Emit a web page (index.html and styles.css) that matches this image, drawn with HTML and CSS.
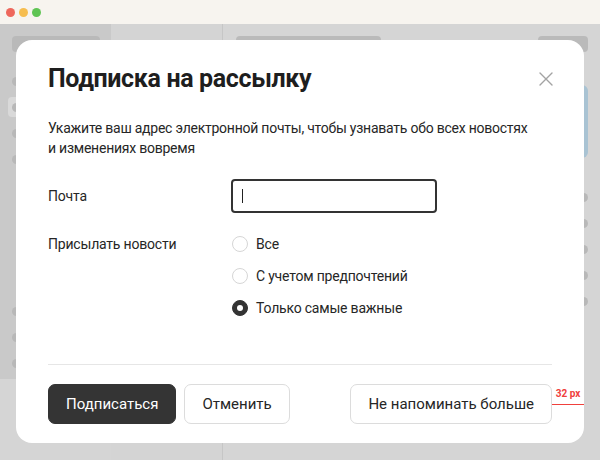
FILE: index.html
```html
<!DOCTYPE html>
<html lang="ru">
<head>
<meta charset="utf-8">
<title>Подписка на рассылку</title>
<link rel="stylesheet" href="styles.css">
</head>
<body>
<div class="window">
  <header class="titlebar">
    <span class="light red"></span>
    <span class="light yellow"></span>
    <span class="light green"></span>
  </header>

  <div class="app">
    <aside class="sidebar">
      <div class="sb-bar"></div>
      <ul class="sb-list">
        <li class="sb-item"><span class="avatar"></span></li>
        <li class="sb-item active"><span class="avatar"></span></li>
        <li class="sb-item"><span class="avatar"></span></li>
        <li class="sb-item"><span class="avatar"></span></li>
      </ul>
      <ul class="sb-list sb-bottom">
        <li class="sb-item"><span class="avatar"></span></li>
        <li class="sb-item"><span class="avatar"></span></li>
        <li class="sb-item"><span class="avatar"></span></li>
      </ul>
    </aside>
    <section class="column"></section>
    <main class="content">
      <div class="toolbar">
        <div class="tb-title"></div>
        <div class="tb-btn"></div>
      </div>
      <div class="panel"></div>
      <ul class="rows">
        <li class="row"><span class="avatar"></span></li>
        <li class="row"><span class="avatar"></span></li>
        <li class="row"><span class="avatar"></span></li>
        <li class="row"><span class="avatar"></span></li>
        <li class="row"><span class="avatar"></span></li>
      </ul>
    </main>
  </div>

  <div class="modal" role="dialog" aria-labelledby="modal-title">
    <div class="modal-head">
      <h2 class="modal-title" id="modal-title">Подписка на рассылку</h2>
      <button class="close" aria-label="Закрыть">
        <svg width="14" height="14" viewBox="0 0 14 14"><path d="M1 1 L13 13 M13 1 L1 13" stroke="#a3a3a3" stroke-width="1.4" fill="none" stroke-linecap="round"/></svg>
      </button>
    </div>
    <p class="desc">Укажите ваш адрес электронной почты, чтобы узнавать обо всех новостях и изменениях вовремя</p>

    <div class="fields">
      <div class="label label-mid">Почта</div>
      <div class="input"><span class="caret"></span></div>

      <div class="label">Присылать новости</div>
      <div class="radios">
        <label class="radio"><span class="radio-dot"></span>Все</label>
        <label class="radio"><span class="radio-dot"></span>С учетом предпочтений</label>
        <label class="radio"><span class="radio-dot checked"></span>Только самые важные</label>
      </div>
    </div>

    <footer class="modal-foot">
      <button class="btn btn-primary">Подписаться</button>
      <button class="btn">Отменить</button>
      <button class="btn btn-push">Не напоминать больше</button>
    </footer>
  </div>

  <div class="spacing-note">32 px</div>
</div>
</body>
</html>
```

FILE: styles.css
```css
* { box-sizing: border-box; }

html, body {
  margin: 0;
  padding: 0;
}

body {
  font-family: Roboto, "Noto Sans", sans-serif;
  color: #262626;
}

ul { list-style: none; margin: 0; padding: 0; }

.window {
  position: relative;
  width: 600px;
  height: 460px;
  overflow: hidden;
  background: #d5d5d5;
  display: flex;
  flex-direction: column;
}

/* title bar with traffic lights */
.titlebar {
  height: 24px;
  background: #f7f4ef;
  display: flex;
  align-items: center;
  gap: 4px;
  padding-left: 6px;
  flex: none;
}

.light {
  width: 9px;
  height: 9px;
  border-radius: 50%;
}
.red { background: #ee675c; }
.yellow { background: #f6bd4f; }
.green { background: #5fc453; }

/* dimmed app behind the dialog */
.app {
  flex: 1;
  display: flex;
  align-items: flex-start;
}

.sidebar {
  width: 111px;
  height: 355px;
  background: #c9c9c9;
  border-bottom-right-radius: 6px;
  padding: 12px 0 3px 12px;
  display: flex;
  flex-direction: column;
  flex: none;
}

.sb-bar {
  width: 88px;
  height: 16px;
  border-radius: 4px;
  background: #b9b9b9;
}

.sb-list { margin-top: 16px; }
.sb-bottom { margin-top: auto; }

.sb-item {
  height: 26px;
  display: flex;
  align-items: center;
}

.sb-item.active {
  margin-left: -4px;
  padding-left: 4px;
  width: 92px;
  height: 20px;
  margin-top: 3px;
  margin-bottom: 3px;
  border-radius: 4px;
  background: #d9d9d9;
}

.avatar {
  width: 9px;
  height: 9px;
  border-radius: 50%;
  background: #b8b8b8;
}

.column {
  width: 112px;
  height: 436px;
  background: #d4d4d4;
  border-right: 1px solid #c6c6c6;
  flex: none;
}

.content {
  flex: 1;
  padding: 12px 12px 0 13px;
}

.toolbar {
  display: flex;
  justify-content: space-between;
}

.tb-title {
  width: 145px;
  height: 16px;
  border-radius: 4px;
  background: #bababa;
}

.tb-btn {
  width: 50px;
  height: 16px;
  border-radius: 4px;
  background: #bababa;
}

.panel {
  margin: 33px 0 0 160px;
  height: 73px;
  border-radius: 6px;
  background: #a9c3d3;
}

.rows { margin-top: 26px; }

.row {
  height: 26px;
  display: flex;
  justify-content: flex-end;
  align-items: center;
}

/* dialog */
.modal {
  position: absolute;
  left: 16px;
  top: 40px;
  width: 568px;
  height: 403px;
  background: #fff;
  border-radius: 16px;
  padding: 23px 32px 19px;
  display: flex;
  flex-direction: column;
}

.modal-head {
  display: flex;
  align-items: center;
  justify-content: space-between;
  height: 32px;
}

.modal-title {
  margin: 0;
  font-size: 25px;
  line-height: 32px;
  font-weight: 700;
  letter-spacing: -0.35px;
  color: #1e1e1e;
}

.close {
  border: 0;
  background: none;
  padding: 0;
  width: 14px;
  height: 14px;
  display: block;
  margin-right: -1px;
}
.close svg { display: block; }

.desc {
  margin: 23px 0 0;
  max-width: 490px;
  font-size: 14px;
  line-height: 20px;
  letter-spacing: -0.24px;
  color: #262626;
}

.fields {
  margin-top: 21px;
  display: grid;
  grid-template-columns: 183px 1fr;
  row-gap: 21px;
  font-size: 14px;
  line-height: 20px;
  letter-spacing: -0.2px;
}

.label-mid { align-self: center; }

.input {
  width: 206px;
  height: 34px;
  border: 2px solid #333;
  border-radius: 4px;
  padding-left: 9px;
  display: flex;
  align-items: center;
}

.caret {
  width: 1px;
  height: 14px;
  background: #222;
}

.radios {
  display: flex;
  flex-direction: column;
  gap: 12px;
  padding-left: 1px;
}

.radio {
  display: flex;
  align-items: center;
  gap: 8px;
  height: 20px;
}

.radio-dot {
  width: 16px;
  height: 16px;
  border-radius: 50%;
  border: 1px solid #d6d6d6;
  display: flex;
  align-items: center;
  justify-content: center;
}

.radio-dot.checked {
  background: #333;
  border-color: #333;
}
.radio-dot.checked::after {
  content: "";
  width: 6px;
  height: 6px;
  border-radius: 50%;
  background: #fff;
}

.modal-foot {
  margin-top: auto;
  border-top: 1px solid #e6e6e6;
  padding-top: 19px;
  display: flex;
  gap: 8px;
}

.btn {
  height: 40px;
  padding: 0 17px;
  border-radius: 7px;
  border: 1px solid #dcdcdc;
  background: #fff;
  font-family: inherit;
  font-size: 15px;
  color: #262626;
}

.btn-primary {
  background: #343434;
  border-color: #343434;
  color: #fff;
}

.btn-push { margin-left: auto; }

/* spacing annotation on the right edge of the footer */
.spacing-note {
  position: absolute;
  left: 552px;
  top: 387px;
  width: 32px;
  height: 18px;
  border-bottom: 1px solid #f0403c;
  color: #f0403c;
  font-size: 10px;
  line-height: 14px;
  font-weight: 700;
  text-align: center;
}
```
